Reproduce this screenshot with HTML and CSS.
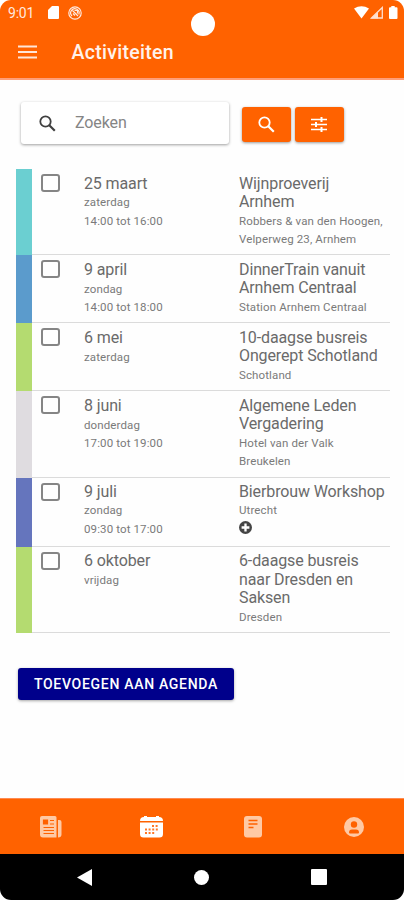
FILE: index.html
```
<!DOCTYPE html>
<html lang="nl">
<head>
<meta charset="utf-8">
<title>Activiteiten</title>
<link rel="stylesheet" href="styles.css">
</head>
<body>
<div class="phone">
  <header class="top">
    <div class="status">
      <span class="clock">9:01</span>
      <svg class="sd" width="11" height="13" viewBox="0 0 11 13"><path d="M4 0h6q1 0 1 1v11q0 1-1 1H1q-1 0-1-1V4z" fill="#fff"/></svg>
      <svg class="dnd" width="14" height="14" viewBox="0 0 14 14" fill="none" stroke="#ffe9df"><circle cx="7" cy="7" r="6.2" stroke-width="1.2"/><path d="M4 10A4.2 4.2 0 1 1 10.800 8.500M4.500 4.500l5.500 5.500M5 7.500l2 2M6.500 4.500h3v3" stroke-width="1.200"/></svg>
      <svg class="signals" width="45" height="14" viewBox="0 0 45 14"><path d="M0 2.500Q7.500-2 15 2.500L7.500 12.500z" fill="#fff"/><path d="M17.500 12 28.300 1.500V12z" fill="none" stroke="#ffe0d0" stroke-width="1.300"/><path d="M17 12.500l7-6.500v6.500z" fill="#ffe0d0"/><path d="M37.300 0h3.400v1.300h1.800q1 0 1 1V12q0 1-1 1h-6.500q-1 0-1-1V2.300q0-1 1-1h1.300z" fill="#fff"/></svg>
    </div>
    <div class="bar">
      <svg width="19" height="14" viewBox="0 0 19 14" fill="#ffe5d8"><path d="M0 .5h19v2H0zM0 6h19v2H0zM0 11.500h19v2H0z"/></svg>
      <h1>Activiteiten</h1>
    </div>
    <i class="camera"></i>
  </header>
  <main>
    <div class="tools">
      <div class="search">
        <svg width="17" height="17" viewBox="0 0 17 17" fill="none" stroke="#404040"><circle cx="6.500" cy="6.500" r="5.200" stroke-width="1.800"/><path d="m10.300 10.300 5.500 5.500" stroke-width="2.200"/></svg>
        <span>Zoeken</span>
      </div>
      <button class="tool"><svg width="17" height="17" viewBox="0 0 17 17" fill="none" stroke="#fff"><circle cx="6.500" cy="6.500" r="5.200" stroke-width="1.800"/><path d="m10.300 10.300 5.500 5.500" stroke-width="2.200"/></svg></button>
      <button class="tool"><svg width="16" height="15" viewBox="0 0 16 15" fill="none" stroke="#fff" stroke-width="1.500"><path d="M0 2.500h16M0 7.500h16M0 12.500h16"/><path d="M10.500 0v5M5 5v5M10.500 10v5" stroke-width="2"/></svg></button>
    </div>
    <section class="list">
      <article class="row tall teal"><i class="box"></i><div class="when"><b>25 maart</b><small>zaterdag<br>14:00 tot 16:00</small></div><div class="what"><b>Wijnproeverij<br>Arnhem</b><small>Robbers &amp; van den Hoogen,<br>Velperweg 23, Arnhem</small></div></article>
      <article class="row blue"><i class="box"></i><div class="when"><b>9 april</b><small>zondag<br>14:00 tot 18:00</small></div><div class="what"><b>DinnerTrain vanuit<br>Arnhem Centraal</b><small>Station Arnhem Centraal</small></div></article>
      <article class="row green"><i class="box"></i><div class="when"><b>6 mei</b><small>zaterdag</small></div><div class="what"><b>10-daagse busreis<br>Ongerept Schotland</b><small>Schotland</small></div></article>
      <article class="row tall grey"><i class="box"></i><div class="when"><b>8 juni</b><small>donderdag<br>17:00 tot 19:00</small></div><div class="what"><b>Algemene Leden<br>Vergadering</b><small>Hotel van der Valk<br>Breukelen</small></div></article>
      <article class="row mid indigo"><i class="box"></i><div class="when"><b>9 juli</b><small>zondag<br>09:30 tot 17:00</small></div><div class="what"><b>Bierbrouw Workshop</b><small>Utrecht</small><svg width="13" height="13" viewBox="0 0 13 13"><circle cx="6.500" cy="6.500" r="6.500" fill="#444"/><path d="M6.500 2.600v7.800M2.600 6.500h7.800" stroke="#fff" stroke-width="2.300"/></svg></div></article>
      <article class="row tall green"><i class="box"></i><div class="when"><b>6 oktober</b><small>vrijdag</small></div><div class="what"><b>6-daagse busreis<br>naar Dresden en<br>Saksen</b><small>Dresden</small></div></article>
    </section>
    <button class="add">TOEVOEGEN AAN AGENDA</button>
  </main>
  <nav class="tabs">
    <span><svg width="22" height="22" viewBox="0 0 22 22"><path d="M2 0h13q1.500 0 1.500 1.500V21.500H3q-3 0-3-3V2q0-2 2-2zM18 4h1.500q2 0 2 2v12.500q0 3-3.500 3z" fill="#ffc9a4"/><path d="M3.500 4h4v4h-4zM10 4.500h4M10 8h4M3.500 11.500H14M3.500 14.500H14M3.500 17.500H14" fill="#ff6200" stroke="#ff6200" stroke-width="1.200"/></svg></span>
    <span><svg width="23" height="22" viewBox="0 0 23 22"><path d="M4 0h3v1h9V0h3v1q4 0 4 4H0q0-4 4-4zM0 6.500h23V18q0 3.500-3.500 3.500h-16Q0 21.500 0 18z" fill="#fff"/><path d="M12 10h7M5 13.500h14M5 17h10" stroke="#ff7726" stroke-width="1.900" stroke-dasharray="2 1.600"/></svg></span>
    <span><svg width="18" height="22" viewBox="0 0 18 22"><rect width="18" height="21.500" rx="3" fill="#ffc9a4"/><path d="M4.500 4.500h9M4.500 8h9M4.500 11.500h5" stroke="#ff6200" stroke-width="1.500"/></svg></span>
    <span><svg width="20" height="20" viewBox="0 0 20 20"><circle cx="10" cy="10" r="10" fill="#ffc9a4"/><circle cx="10" cy="7.500" r="3.200" fill="#ff6200"/><path d="M5 15.500q0-3 3-3h4q3 0 3 3 0 1-1 1H6q-1 0-1-1z" fill="#ff6200"/></svg></span>
  </nav>
  <footer class="system">
    <svg width="15" height="17" viewBox="0 0 15 17"><path d="M0 8.500 15 0v17z" fill="#fff"/></svg>
    <svg width="15" height="15" viewBox="0 0 15 15"><circle cx="7.500" cy="7.500" r="7.500" fill="#fff"/></svg>
    <svg width="16" height="16" viewBox="0 0 16 16"><rect width="16" height="16" rx="1" fill="#fff"/></svg>
  </footer>
</div>
</body>
</html>
```
FILE: styles.css
```
* { box-sizing: border-box; }
body { margin: 0; background: #fff; font-family: Roboto, sans-serif; color: #666; }
.phone { width: 404px; height: 900px; display: flex; flex-direction: column; overflow: hidden; border-radius: 11px; background: #fefefe; }
.top { height: 80px; flex: none; background: #ff6200; position: relative; color: #fff; border-bottom: 2px solid #ff9e78; }
.status { height: 25px; display: flex; align-items: center; padding: 0 5px 0 8px; }
.clock { font-size: 14px; width: 27px; color: #ffe9df; white-space: nowrap; letter-spacing: -.2px; }
.sd { margin-left: 13px; }
.dnd { margin-left: 9px; }
.signals { margin-left: auto; }
.camera { position: absolute; left: 191px; top: 12px; width: 24px; height: 24px; border-radius: 50%; background: #fff; }
.bar { display: flex; align-items: center; height: 53px; padding-left: 18px; }
h1 { margin: 1px 0 0 34.500px; font-size: 19.500px; font-weight: 500; letter-spacing: .28px; color: #fff2ec; }
main { flex: 1; min-height: 0; }
.tools { display: flex; align-items: center; padding: 22px 0 0 21px; }
.search { width: 208px; height: 42px; display: flex; align-items: center; padding-left: 18px; border-radius: 3px; background: #fff; box-shadow: 0 1px 3px rgba(0,0,0,.38); margin-right: 12.500px; }
.search span { margin-left: 19px; font-size: 16px; letter-spacing: -.1px; color: #858585; line-height: 20px; }
.tool { width: 49.500px; height: 35.500px; border: 0; border-radius: 3px; background: #ff6200; margin: 3px 3.500px 0 0; padding: 0; display: flex; align-items: center; justify-content: center; box-shadow: 0 1px 3px rgba(0,0,0,.4); }
.list { margin: 25px 14px 0 16px; }
.row { height: 68px; display: flex; position: relative; border-left: 16px solid; }
.row::after { content: ""; position: absolute; left: 0; right: 0; bottom: 0; height: 1px; background: #dbdbdb; }
.tall { height: 86.300px; }
.mid { height: 69px; }
.teal { border-color: #6bcfd1; }
.blue { border-color: #5b9bcc; }
.green { border-color: #b4db70; }
.grey { border-color: #dfdce0; }
.indigo { border-color: #6575bd; }
.box { width: 19px; height: 18px; margin: 5px 24px 0 9px; border: 2px solid #858585; border-radius: 3px; flex: none; }
.when { width: 155px; padding-top: 5.700px; flex: none; }
.what { padding-top: 5.700px; white-space: nowrap; }
b { display: block; font-weight: 400; font-size: 16px; line-height: 18.300px; letter-spacing: -.12px; color: #6a6a6a; }
small { display: block; margin-top: .4px; font-size: 11.500px; line-height: 18.300px; letter-spacing: .12px; color: #7a7a7a; }
.what svg { display: block; margin-top: 1px; }
.mid .when, .mid .what { padding-top: 5px; }
.add { display: block; margin: 35px 0 0 18px; width: 216px; height: 32px; border: 0; border-radius: 3px; background: #00008b; color: #fff; font: 500 14px Roboto, sans-serif; letter-spacing: .7px; padding: 0; white-space: nowrap; box-shadow: 0 1px 3px rgba(0,0,0,.35); }
.tabs { height: 56px; flex: none; background: #ff6200; border-top: 1px solid #ff8a50; display: grid; grid-template-columns: repeat(4, 1fr); }
.tabs span { display: flex; align-items: center; justify-content: center; }
.system { height: 46px; flex: none; background: #000; display: flex; justify-content: space-between; align-items: center; padding: 0 77px; }
```
